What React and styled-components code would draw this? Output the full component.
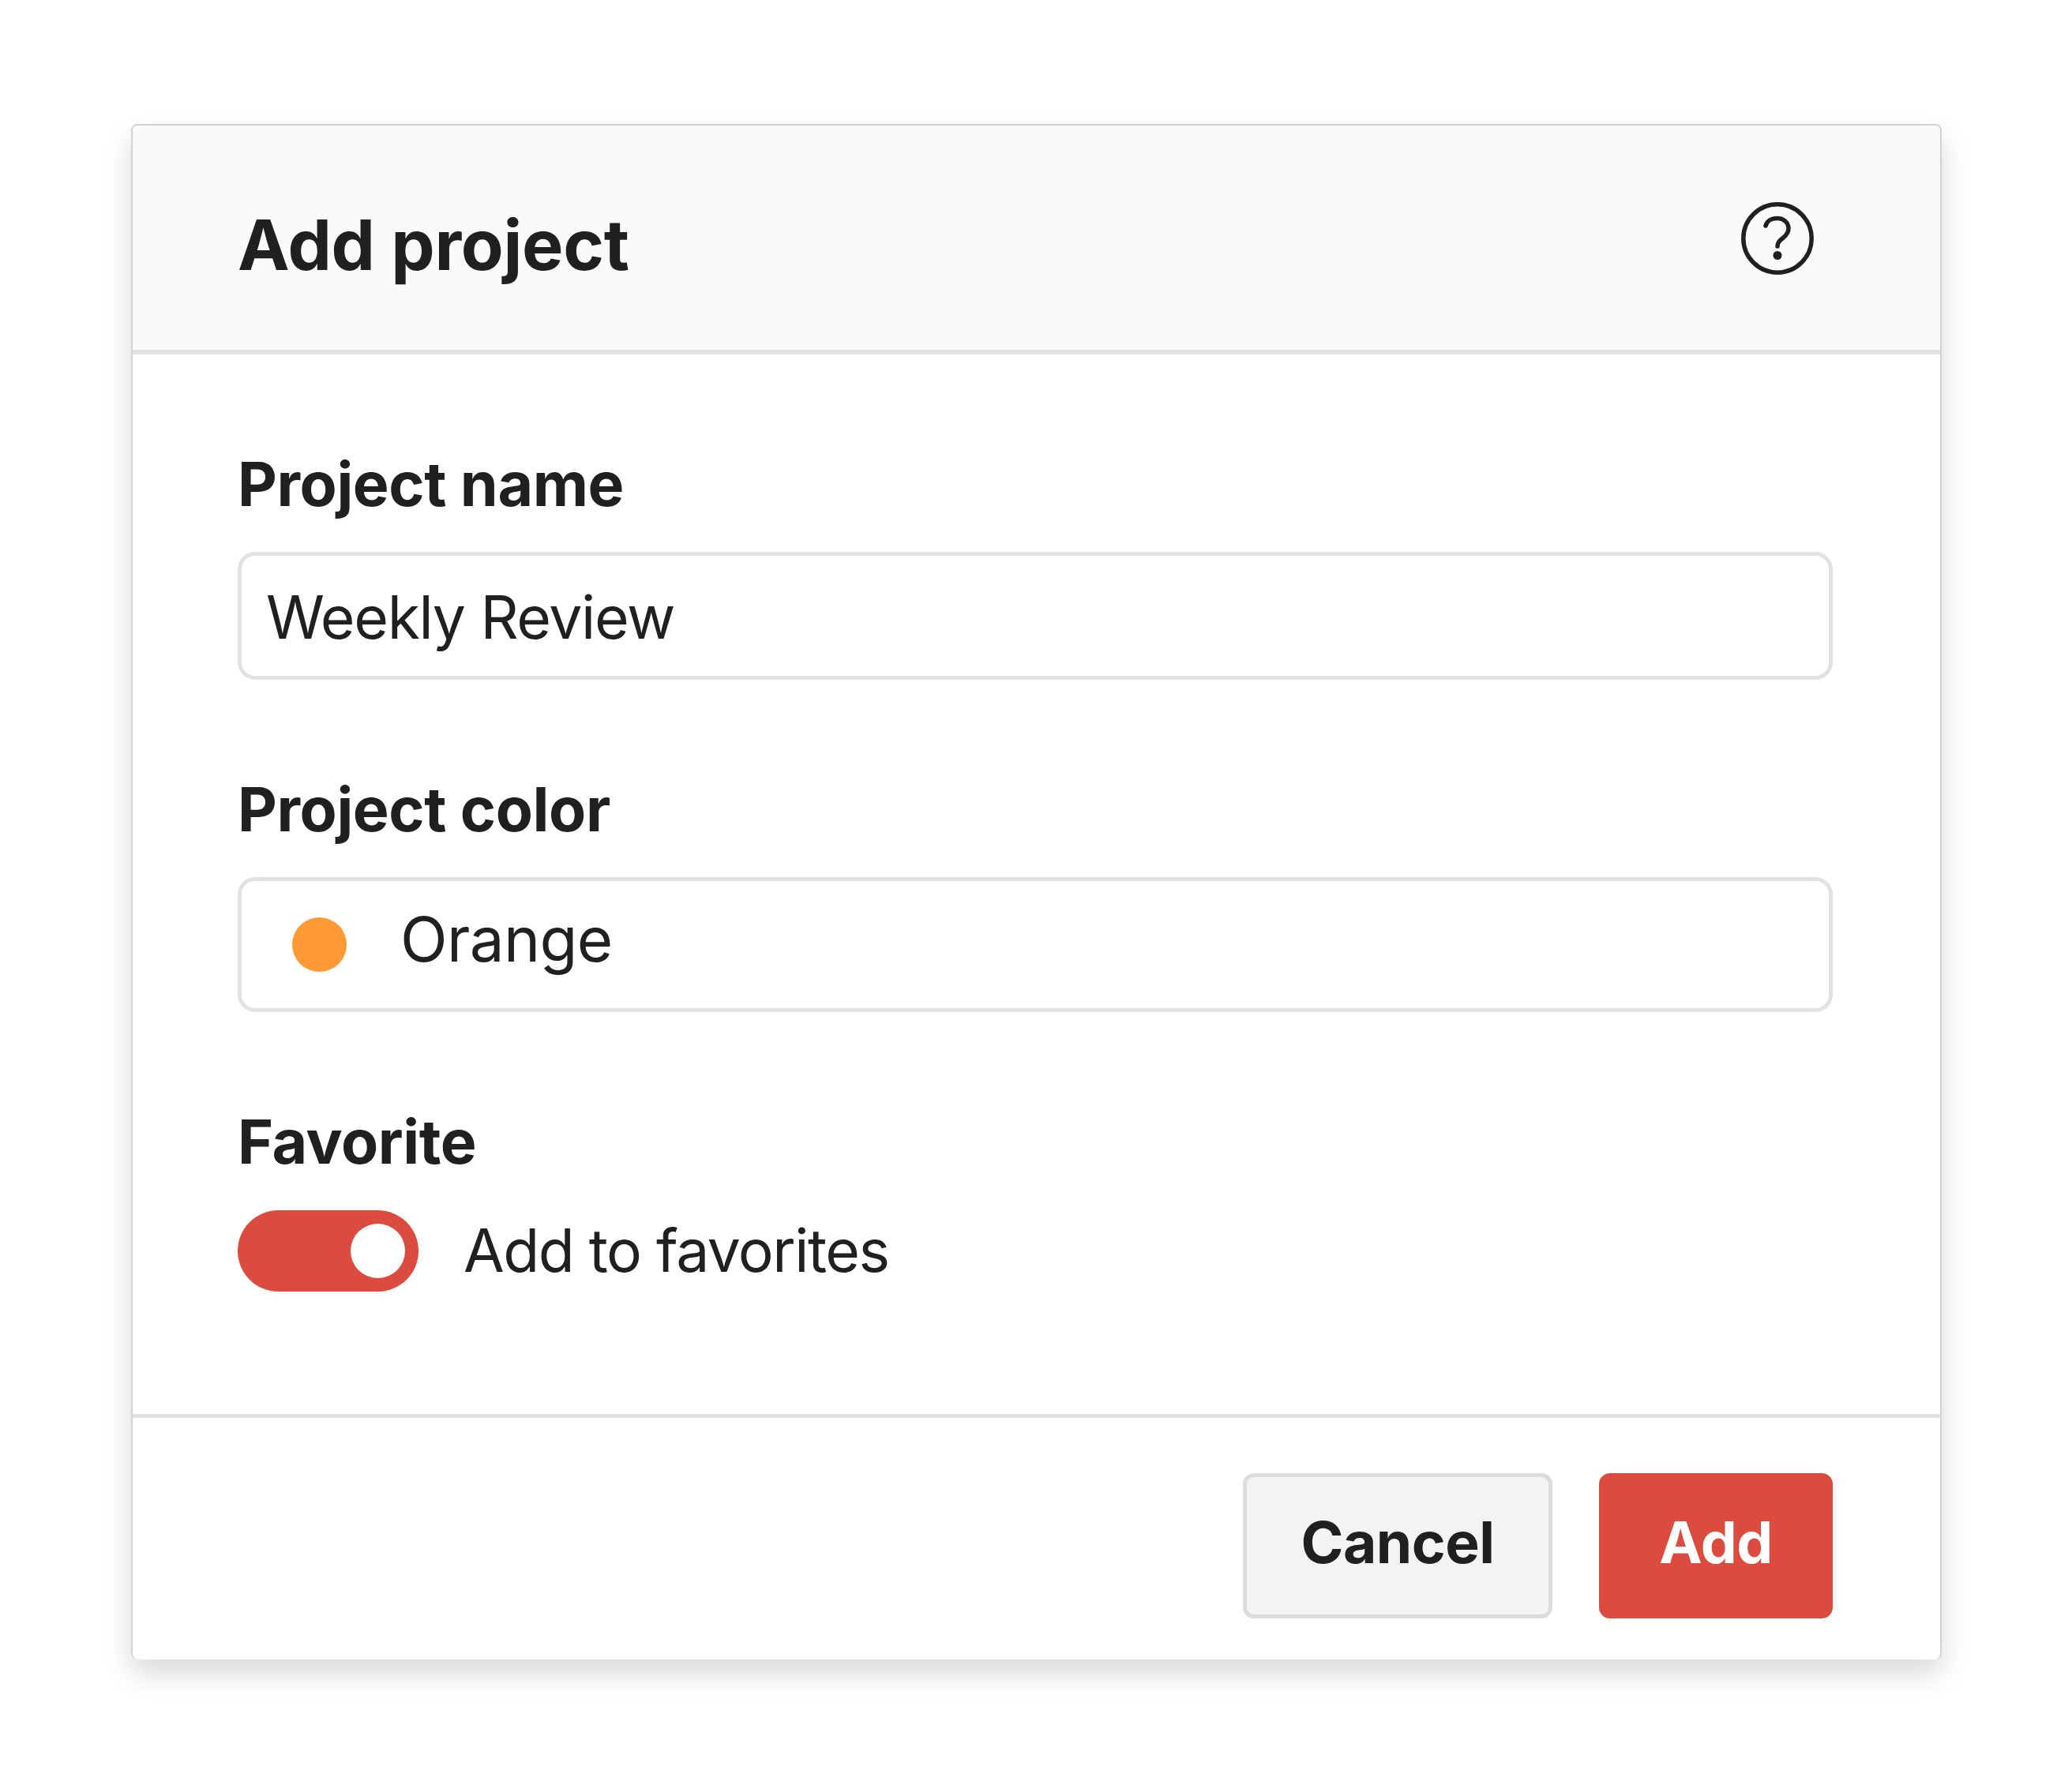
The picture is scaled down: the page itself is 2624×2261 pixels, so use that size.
import React from 'react'
import styled, {createGlobalStyle} from 'styled-components'

const GlobalStyle = createGlobalStyle`
    html, body{
        margin: 0;
        background: #fff;
        font-family: Inter, "Liberation Sans", sans-serif;
        color: #202020;
    }
`
const Page = styled.div`
    width: 2624px;
    height: 2261px;
    padding: 157px 165px 0 166px;
    box-sizing: border-box;
`
const Card = styled.div`
    height: 1945px;
    display: flex;
    flex-direction: column;
    box-sizing: border-box;
    background: #fff;
    border: solid #d2d2d2;
    border-width: 2px 2px 0 2px;
    border-radius: 8px;
    box-shadow: 0 18px 36px rgba(0, 0, 0, 0.15);
`
const Header = styled.header`
    height: 284px;
    flex: none;
    display: flex;
    justify-content: space-between;
    align-items: center;
    padding: 0 160px 0 133px;
    background: #fafafa;
    border-bottom: solid 6px #e0e0e0;
    border-radius: 6px 6px 0 0;
    h1{
        margin: 17px 0 0;
        font-size: 88px;
        line-height: 100px;
        font-weight: 700;
        letter-spacing: -0.3px;
    }
    svg{
        display: block;
        margin-top: 2px;
    }
`
const Body = styled.div`
    flex: 1;
    padding: 124px 136px 0 133px;
`
const Label = styled.div`
    height: 80px;
    line-height: 80px;
    font-size: 77px;
    font-weight: 700;
    letter-spacing: -0.4px;
    margin-top: ${p => p.first ? 0 : '124px'};
`
const Field = styled.div`
    height: ${p => p.tall ? '171px' : '162px'};
    margin-top: 46px;
    box-sizing: border-box;
    display: flex;
    align-items: center;
    padding: ${p => p.tall ? '0 0 14px 64px' : '2px 0 0 31px'};
    border: solid 5px #e2e2e2;
    border-radius: 22px;
    font-size: ${p => p.tall ? '78px' : '75px'};
    letter-spacing: ${p => p.tall ? '-0.6px' : '-1.3px'};
`
const Dot = styled.span`
    width: 69px;
    height: 69px;
    margin: 14px 68px 0 0;
    border-radius: 50%;
    background: #ff9933;
`
const ToggleRow = styled.div`
    display: flex;
    align-items: center;
    gap: 57px;
    margin-top: 47px;
    font-size: 75px;
    letter-spacing: -1.5px;
`
const ToggleText = styled.span`
    margin-top: -3px;
`
const Toggle = styled.span`
    width: 229px;
    height: 103px;
    padding: 17px;
    box-sizing: border-box;
    display: flex;
    justify-content: flex-end;
    border-radius: 52px;
    background: #dc4c3e;
    i{
        width: 69px;
        height: 69px;
        border-radius: 50%;
        background: #fff;
    }
`
const Footer = styled.footer`
    height: 311px;
    flex: none;
    display: flex;
    justify-content: flex-end;
    gap: 59px;
    box-sizing: border-box;
    padding: 70px 136px 0 0;
    border-top: solid 5px #e0e0e0;
`
const Button = styled.button`
    width: ${p => p.primary ? '296px' : '392px'};
    height: 184px;
    padding: 0 0 10px;
    box-sizing: border-box;
    font-family: inherit;
    font-size: 73px;
    font-weight: 700;
    letter-spacing: -0.5px;
    border-radius: 14px;
    border: solid 5px ${p => p.primary ? '#dc4c3e' : '#dcdcdc'};
    background: ${p => p.primary ? '#dc4c3e' : '#f3f3f3'};
    color: ${p => p.primary ? '#fff' : '#202020'};
`

const HelpIcon = () => (
    <svg width="92" height="92" viewBox="0 0 92 92" fill="none" stroke="#202020" strokeWidth="5.5" strokeLinecap="round">
        <circle cx="46" cy="46" r="43.2"/>
        <path d="M31 30c1.500-6 7-9.500 14.500-9.500 8.500 0 14.500 5.500 14.500 13 0 5-2.500 8-6.500 11.500-4.500 3.500-7.500 6-7.500 11"/>
        <circle cx="46" cy="67.500" r="5.500" fill="#202020" stroke="none"/>
    </svg>
)

const App = () => {
    return (
        <Page>
            <GlobalStyle/>
            <Card>
                <Header>
                    <h1>Add project</h1>
                    <HelpIcon/>
                </Header>
                <Body>
                    <Label first>Project name</Label>
                    <Field>Weekly Review</Field>
                    <Label>Project color</Label>
                    <Field tall><Dot/>Orange</Field>
                    <Label>Favorite</Label>
                    <ToggleRow>
                        <Toggle><i/></Toggle>
                        <ToggleText>Add to favorites</ToggleText>
                    </ToggleRow>
                </Body>
                <Footer>
                    <Button>Cancel</Button>
                    <Button primary>Add</Button>
                </Footer>
            </Card>
        </Page>
    )
}

export default App
